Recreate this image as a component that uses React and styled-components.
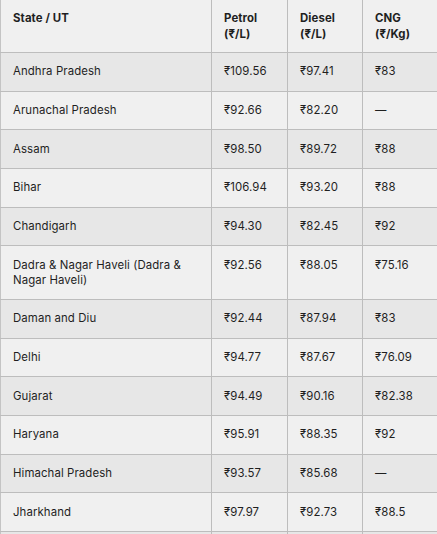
import React from "react";
import styled, { createGlobalStyle } from "styled-components";

const rows = [
  ["Andhra Pradesh", "₹109.56", "₹97.41", "₹83"],
  ["Arunachal Pradesh", "₹92.66", "₹82.20", "—"],
  ["Assam", "₹98.50", "₹89.72", "₹88"],
  ["Bihar", "₹106.94", "₹93.20", "₹88"],
  ["Chandigarh", "₹94.30", "₹82.45", "₹92"],
  ["Dadra & Nagar Haveli (Dadra & Nagar Haveli)", "₹92.56", "₹88.05", "₹75.16"],
  ["Daman and Diu", "₹92.44", "₹87.94", "₹83"],
  ["Delhi", "₹94.77", "₹87.67", "₹76.09"],
  ["Gujarat", "₹94.49", "₹90.16", "₹82.38"],
  ["Haryana", "₹95.91", "₹88.35", "₹92"],
  ["Himachal Pradesh", "₹93.57", "₹85.68", "—"],
  ["Jharkhand", "₹97.97", "₹92.73", "₹88.5"],
  ["Karnataka", "₹102.86", "₹88.94", "₹89"],
];

const widths = [211, 76, 75, 75];

const GlobalStyle = createGlobalStyle`
  body {
    margin: 0;
    background: #f0f0f0;
    font-family: Inter, "Noto Sans", sans-serif;
    color: #1f1f1f;
    overflow: hidden;
  }
`;

const Table = styled.table`
  width: 437px;
  border-collapse: collapse;
  table-layout: fixed;
  background: #f0f0f0;
  font-size: 11.4px;
  letter-spacing: 0.1px;
  border-left: 1px solid #c4c4c4;
`;

const Head = styled.th`
  text-align: left;
  vertical-align: top;
  font-weight: 700;
  padding: 10px 12px;
  line-height: 16px;
  border-right: 1px solid #bdbdbd;
  border-bottom: 1px solid #bdbdbd;
  &:last-child {
    border-right: none;
  }
`;

const Row = styled.tr`
  background: ${(p) => (p.$striped ? "#e7e7e7" : "#f0f0f0")};
`;

const Cell = styled.td`
  padding: 11.33px 12px;
  line-height: 15px;
  vertical-align: top;
  border-right: 1px solid #bdbdbd;
  border-bottom: 1px solid #bdbdbd;
  &:last-child {
    border-right: none;
  }
`;

export default function App() {
  return (
    <>
      <GlobalStyle />
      <Table>
        <colgroup>
          {widths.map((w, i) => (
            <col key={i} style={{ width: w }} />
          ))}
        </colgroup>
        <thead>
          <tr>
            <Head>State / UT</Head>
            <Head>
              Petrol
              <br />
              (₹/L)
            </Head>
            <Head>
              Diesel
              <br />
              (₹/L)
            </Head>
            <Head>
              CNG
              <br />
              (₹/Kg)
            </Head>
          </tr>
        </thead>
        <tbody>
          {rows.map((r, i) => (
            <Row key={r[0]} $striped={i % 2 === 0}>
              {r.map((c, j) => (
                <Cell key={j}>{c}</Cell>
              ))}
            </Row>
          ))}
        </tbody>
      </Table>
    </>
  );
}
